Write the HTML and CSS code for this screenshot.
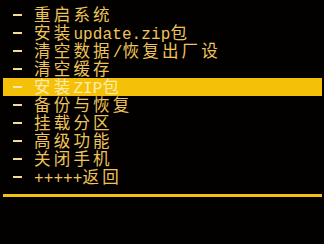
FILE: index.html
```html
<!DOCTYPE html>
<html>
<head>
<meta charset="utf-8">
<link rel="stylesheet" href="styles.css">
</head>
<body>
<div class="screen">
  <ul class="menu">
    <li class="row"><span class="dash"></span><span class="label">重启系统</span></li>
    <li class="row"><span class="dash"></span><span class="label">安装<span class="a">update.zip</span>包</span></li>
    <li class="row"><span class="dash"></span><span class="label">清空数据<span class="a">/</span>恢复出厂设</span></li>
    <li class="row"><span class="dash"></span><span class="label">清空缓存</span></li>
    <li class="row sel"><span class="dash"></span><span class="label">安装<span class="a">ZIP</span>包</span></li>
    <li class="row"><span class="dash"></span><span class="label">备份与恢复</span></li>
    <li class="row"><span class="dash"></span><span class="label">挂载分区</span></li>
    <li class="row"><span class="dash"></span><span class="label">高级功能</span></li>
    <li class="row"><span class="dash"></span><span class="label">关闭手机</span></li>
    <li class="row"><span class="dash"></span><span class="label"><span class="a">+++++</span>返回</span></li>
  </ul>
  <div class="rule"></div>
</div>
</body>
</html>
```
FILE: styles.css
```css
html, body {
  margin: 0;
  padding: 0;
  background: #000;
}
.screen {
  width: 324px;
  height: 244px;
  padding: 6px 2px 0 3px;
  box-sizing: border-box;
  background: #020100;
}
.menu {
  list-style: none;
  margin: 0;
  padding: 0;
}
.row {
  display: flex;
  align-items: center;
  height: 18px;
  color: #efc45a;
  font-family: "Noto Sans CJK SC", sans-serif;
  font-size: 16.5px;
  line-height: 18px;
  letter-spacing: 3.2px;
  white-space: nowrap;
}
.row.sel {
  background: #f5c008;
  color: #fbecb0;
}
.dash {
  display: inline-block;
  width: 9px;
  height: 2px;
  margin-left: 10px;
  margin-right: 12px;
  background: #f3dc9a;
}
.row.sel .dash {
  background: #fbecb0;
}
.label {
  display: inline-block;
  height: 18px;
  line-height: 17px;
}
.a {
  font-family: "Liberation Mono", monospace;
  font-size: 16px;
  letter-spacing: 0.1px;
}
.rule {
  margin-top: 8px;
  height: 3px;
  background: #f2c20e;
}
```
